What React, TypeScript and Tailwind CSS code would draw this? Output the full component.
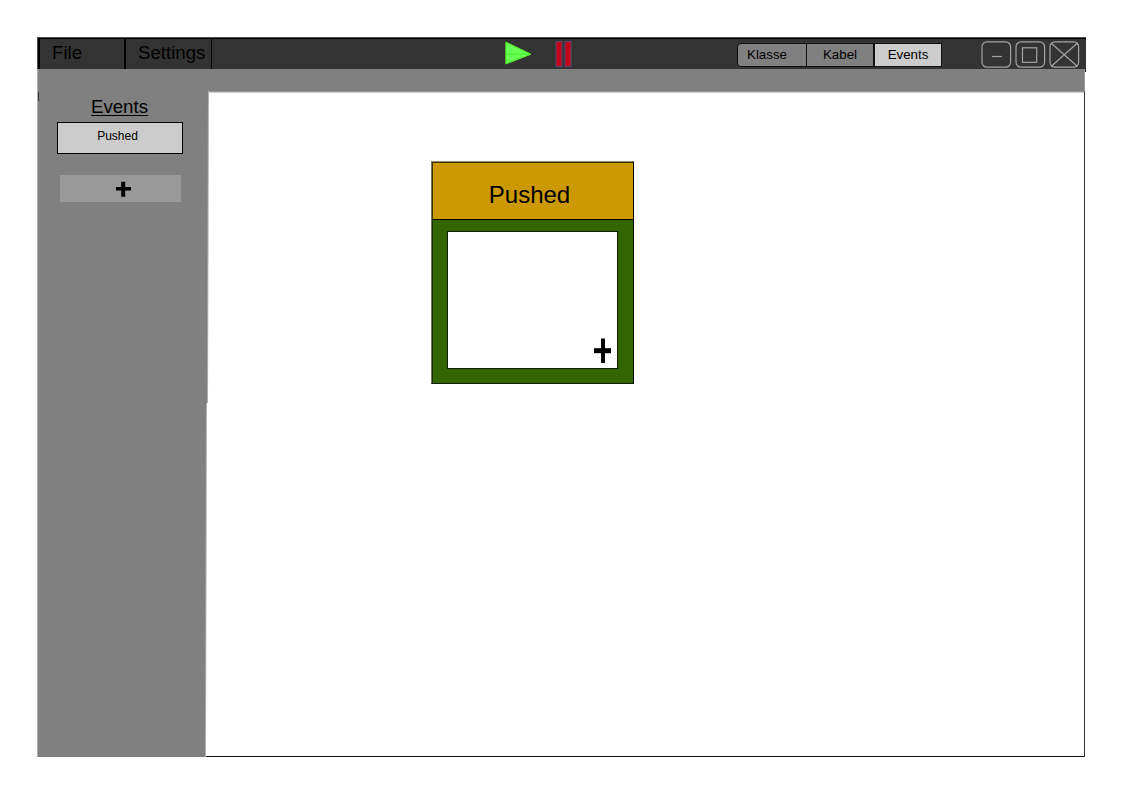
import type { ReactNode } from 'react';

function WindowButton({ label, children }: { label: string; children: ReactNode }) {
  return (
    <button aria-label={label} className="h-7 w-[31px]">
      <svg width="31" height="28" viewBox="0 0 31 28" fill="none" stroke="#a3a3a3" strokeWidth="1.2">
        <rect x="1" y="0.8" width="28.6" height="25.4" rx="5" />
        {children}
      </svg>
    </button>
  );
}

function TitleBar() {
  return (
    <header className="flex h-8 w-[1049px] border-t border-[#505050] bg-[#333333] shadow-[inset_0_1px_0_#000000]">
      <nav className="flex w-[175px] border-l border-[#505050] text-[18.67px] leading-[30px]">
        <button className="flex w-[88px] border-l-2 border-r-2 border-black pl-3">File</button>
        <button className="flex w-[86px] border-r border-black pl-3">Settings</button>
      </nav>
      <div className="flex w-[525px] items-start gap-6 pt-[3px] pl-[293px]">
        <button aria-label="Run" className="h-6 w-[27px]">
          <svg width="27" height="24" viewBox="0 0 27 24">
            <path d="M0.8 1 L26 13.2 L0.8 23Z" fill="#66ff55" stroke="#55e722" />
            <path d="M1 13.2H25" stroke="#48ef28" fill="none" />
          </svg>
        </button>
        <button aria-label="Pause" className="-ml-px h-[27px] w-[17px]">
          <svg width="17" height="27" viewBox="0 0 17 27" fill="#c4001a" stroke="#5a4870">
            <rect x="1" y="0.5" width="6" height="25" />
            <rect x="10" y="0.5" width="6" height="25" />
          </svg>
        </button>
      </div>
      <div className="mt-[5px] flex h-6 w-[205px] text-[13.33px] leading-[22px]">
        <button className="flex w-[70px] rounded-l border border-[#111111] bg-[#808080] pl-[9px]">Klasse</button>
        <button className="flex w-[67px] justify-center border-y border-r border-[#111111] bg-[#808080]">Kabel</button>
        <button className="flex w-[68px] justify-center border border-[#111111] bg-[#cccccc]">Events</button>
      </div>
      <div className="mt-[3px] ml-[39px] flex gap-[3px]">
        <WindowButton label="Minimize"><path d="M11 15.5H21" /></WindowButton>
        <WindowButton label="Maximize"><rect x="7.5" y="6.8" width="14.2" height="14.5" /></WindowButton>
        <WindowButton label="Close"><path d="M2 2L28.5 25.5M28.5 2L2 25.5" /></WindowButton>
      </div>
    </header>
  );
}

function Sidebar() {
  return (
    <div className="h-[666px] w-[172px] bg-[#b0b0b0] [clip-path:polygon(0_0,100%_0,171px_312px,170px_312px,169px_100%,0_100%)]">
      <aside className="flex h-full flex-col pl-5 bg-[#808080] [clip-path:polygon(1px_0,171px_0,170px_312px,169px_312px,168px_100%,1px_100%)]">
        <h2 className="mt-[5px] w-[125px] text-center text-[18.67px] leading-[22px] underline decoration-1 underline-offset-2">Events</h2>
        <button className="mt-[4px] h-8 w-[126px] border border-black bg-[#cccccc] pr-[5px] pb-[4px] text-xs">Pushed</button>
        <button aria-label="Add event" className="mt-[21px] ml-[3px] flex h-[27px] w-[121px] items-center justify-center bg-[#999999] pl-[5px]">
          <svg width="15" height="16" viewBox="0 0 15 16" stroke="#000" fill="none">
            <path d="M7.2 0.8V15.8" strokeWidth="4" />
            <path d="M0 7.7H15" strokeWidth="3.6" />
          </svg>
        </button>
      </aside>
    </div>
  );
}

function EventCard() {
  return (
    <section className="flex h-[223px] w-[203px] flex-col border border-t-[#8c8c70] border-r-[#050500] border-b-[#102000] border-l-[#77775f] bg-[#336600]">
      <h1 className="h-[58px] border-t border-b border-l border-t-[#3f3000] border-b-black border-l-[#3f3000] bg-[#cc9900] pr-[7px] text-center text-2xl leading-[64px]">Pushed</h1>
      <div className="flex-1 border-l border-[#183000] pt-[11px] pl-[14px]">
        <div className="flex h-[138px] w-[171px] items-end justify-end border border-[#102000] bg-white pr-[6px] pb-[4px]">
          <button aria-label="Add action" className="h-[26px] w-[17px]">
            <svg width="17" height="26" viewBox="0 0 17 26" stroke="#000" fill="none">
              <path d="M9 0.5V25" strokeWidth="4" />
              <path d="M0 12.7H17" strokeWidth="5" />
            </svg>
          </button>
        </div>
      </div>
    </section>
  );
}

export default function App() {
  return (
    <div className="h-[794px] w-[1123px] overflow-hidden bg-white pt-[37px] pl-[37px] font-['Liberation_Sans',sans-serif] text-black">
      <TitleBar />
      <div className="flex h-[22px] w-[1049px] border-l border-[#b0b0b0]">
        <div className="w-[1047px] border-r border-[#999999] bg-[#808080]" />
        <div className="h-[3px] w-px bg-[#222222]" />
      </div>
      <div className="relative flex h-[666px] w-[1049px]">
        <Sidebar />
        <main className="-ml-[3px] flex-1">
          <div className="h-[666px] w-[879px] border-t border-r border-b border-t-[#999999] border-r-[#333333] border-b-[#111111] pt-[69px] pl-[225px] shadow-[inset_0_1px_0_#d0d0d0]">
            <EventCard />
          </div>
        </main>
        <div className="absolute top-[1px] left-[1px] h-[9px] w-px bg-[#333333]" />
      </div>
    </div>
  );
}
